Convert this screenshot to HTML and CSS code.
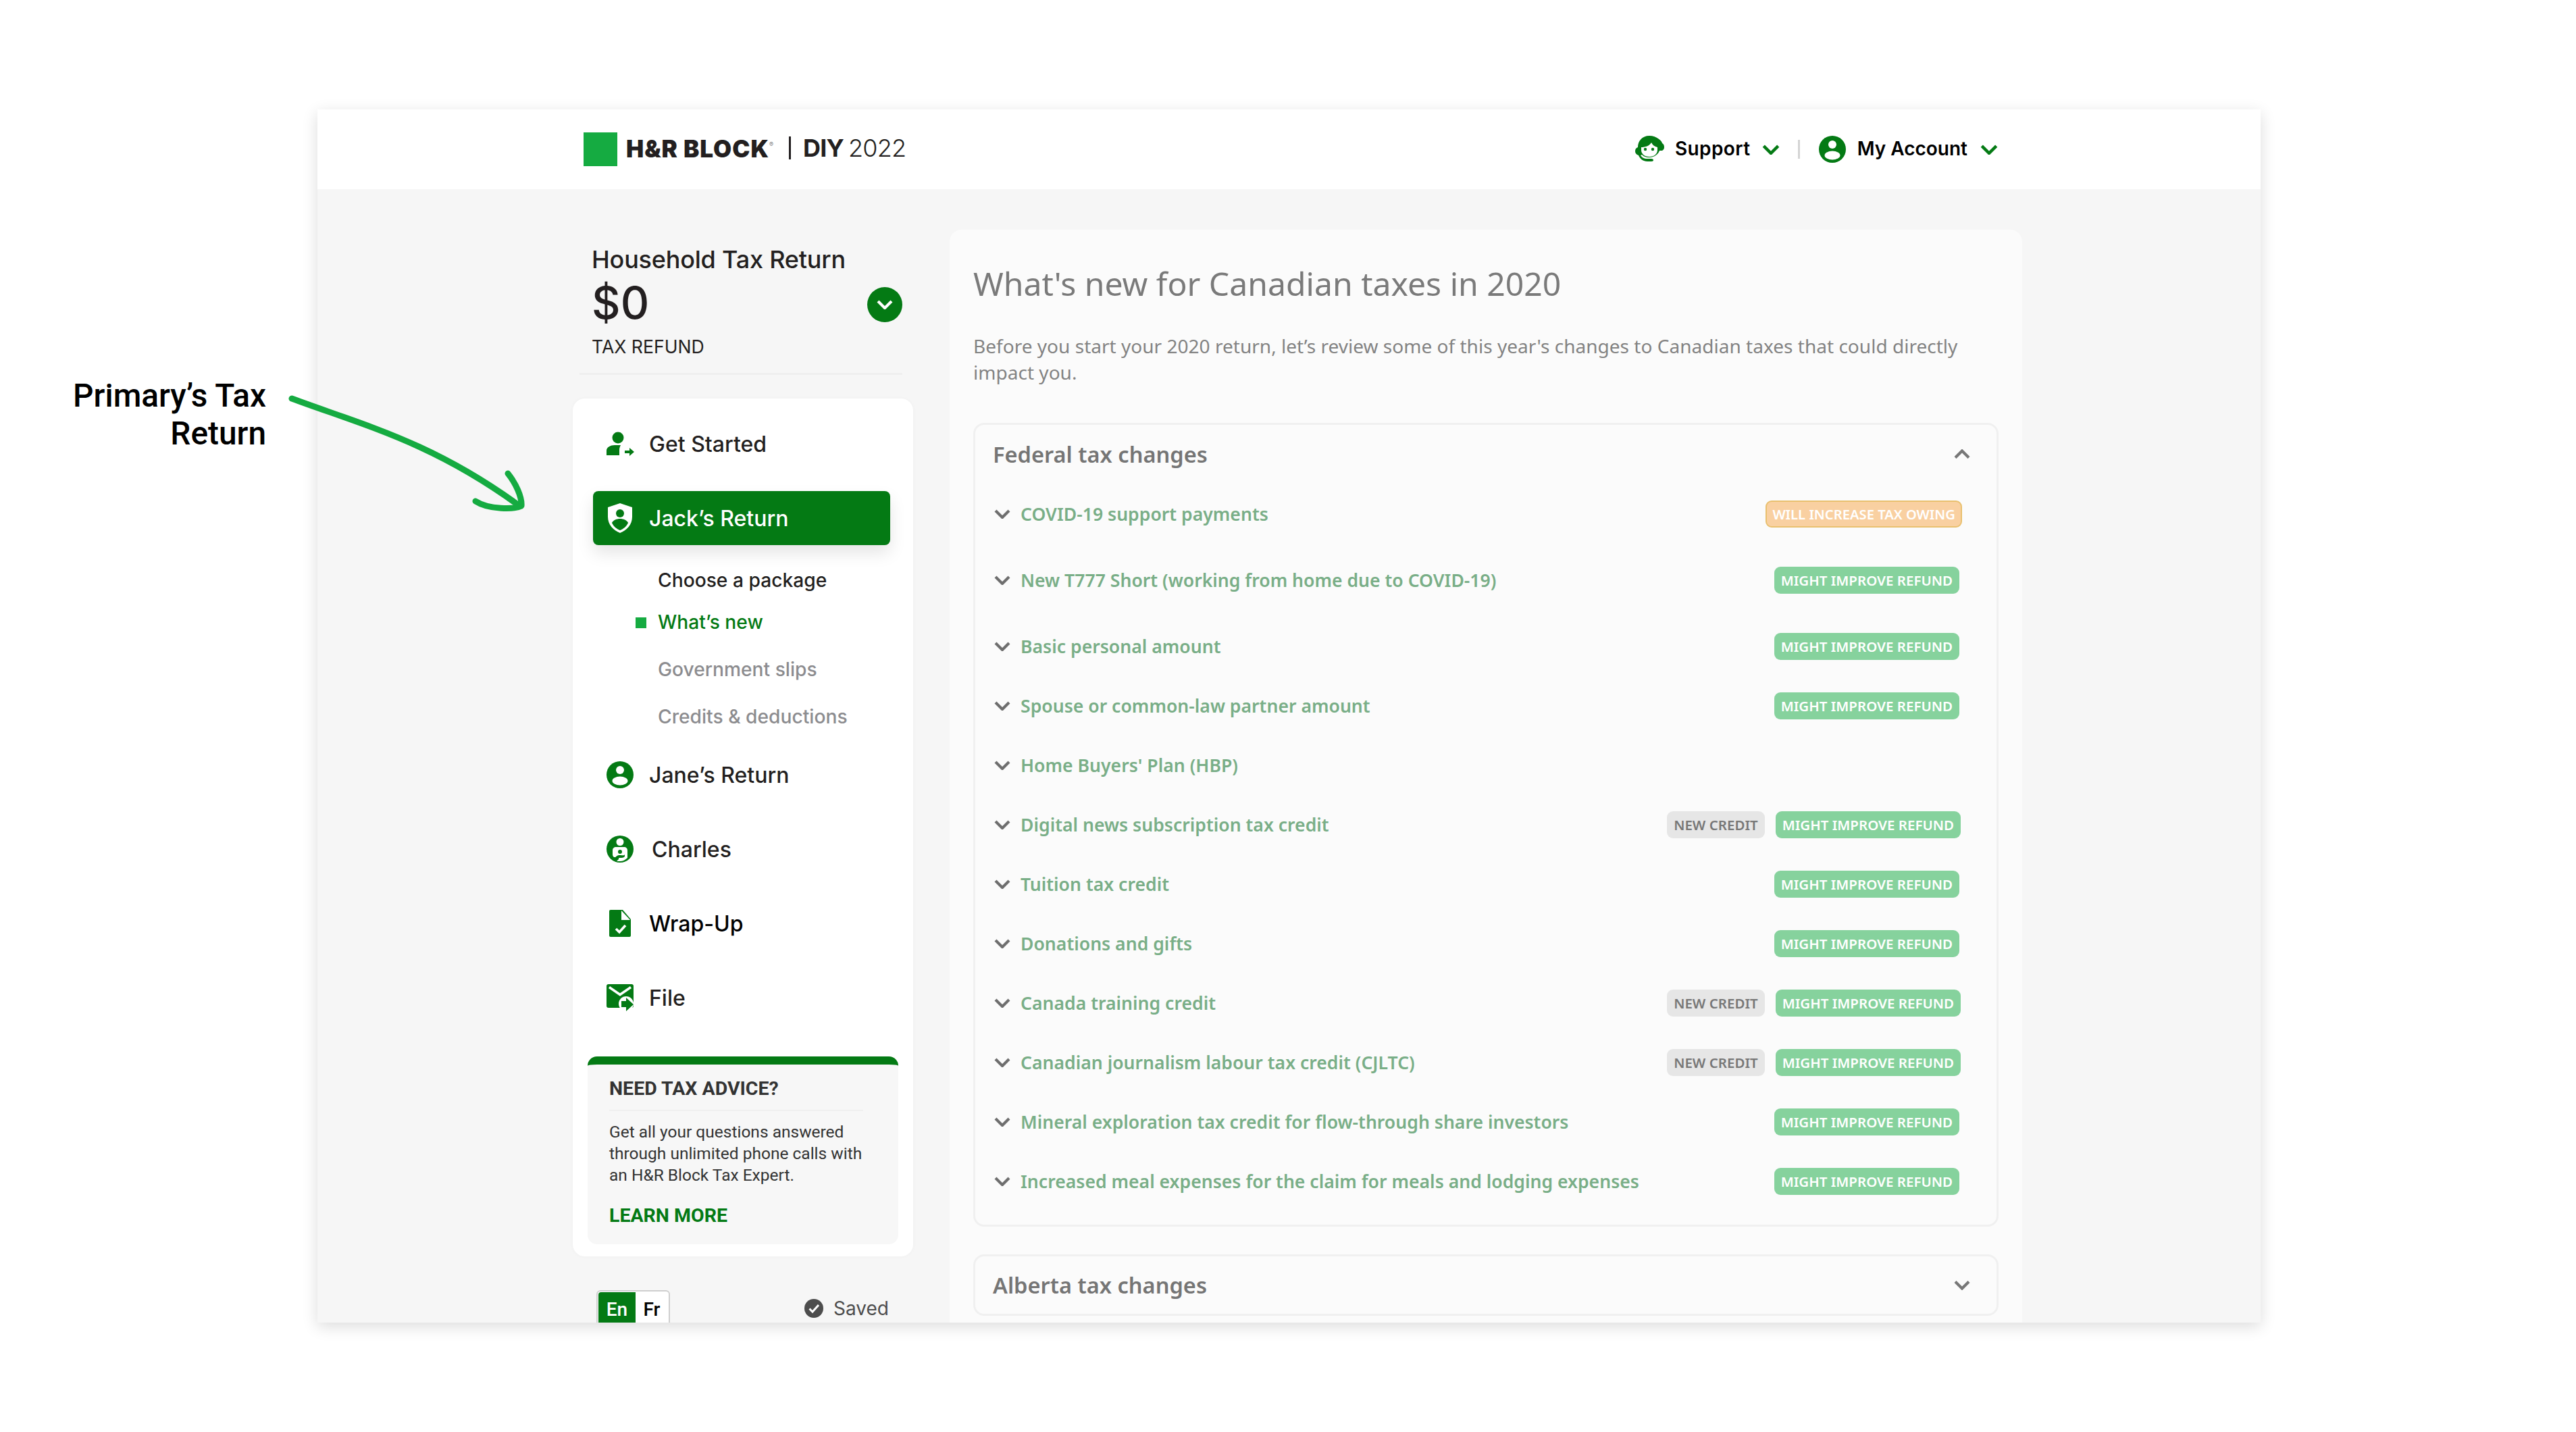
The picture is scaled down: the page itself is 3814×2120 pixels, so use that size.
FILE: index.html
```html
<!DOCTYPE html>
<html lang="en">
<head>
<meta charset="utf-8">
<title>H&amp;R Block DIY 2022</title>
<link rel="stylesheet" href="styles.css">
</head>
<body>
<svg class="defs" width="0" height="0" aria-hidden="true">
  <symbol id="chev" viewBox="0 0 24 14"><path d="M2 2l10 10L22 2" fill="none" stroke="currentColor" stroke-width="4.200"/></symbol>
</svg>
<div class="note">Primary’s Tax<br>Return</div>
<svg class="arrow" width="360" height="180" viewBox="425 583 360 180" aria-hidden="true">
  <path d="M432 590C540 630 640 655 768 748" fill="none" stroke="#15ab41" stroke-width="9" stroke-linecap="round"/>
  <path d="M752 701C764 716 773 736 772 749C762 754 724 755 704 742" fill="none" stroke="#15ab41" stroke-width="9" stroke-linecap="round" stroke-linejoin="round"/>
</svg>
<div class="frame">
  <header class="top">
    <div class="logo">
      <span class="logo-mark"></span>
      <span class="logo-word">H&amp;R BLOCK</span><span class="logo-reg">®</span>
      <span class="logo-bar"></span>
      <span class="logo-diy">DIY</span><span class="logo-year">2022</span>
    </div>
    <nav class="top-nav">
      <svg class="top-icon" width="44" height="40" viewBox="0 0 44 40" aria-hidden="true">
        <path fill="#047a14" d="M22 0C11 0 5 8 5 17c-3 1-4 3-4 6s2 5 5 6c2 5 7 9 13 9h6c2 0 3-1 3-2s-1-2-3-2h-6c-5 0-8-2-10-5l2-1c2 2 5 4 11 4 8 0 14-6 15-10h4c2-1 3-3 3-5 0-3-1-5-3-6C41 8 33 0 22 0z"/>
        <path fill="#fff" d="M10 17c6 0 12-2 15-7 2 4 5 6 9 7v4c0 6-5 10-12 10s-12-4-12-10z"/>
        <circle cx="16" cy="20" r="2.200" fill="#047a14"/><circle cx="27" cy="20" r="2.200" fill="#047a14"/>
      </svg>
      <span class="top-link top-link--support">Support</span>
      <svg class="top-chev" width="26" height="15" aria-hidden="true"><use href="#chev"/></svg>
      <span class="top-sep"></span>
      <svg class="top-icon" width="42" height="40" viewBox="0 0 40 40" aria-hidden="true">
        <circle cx="20" cy="20" r="20" fill="#047a14"/><circle cx="20" cy="13" r="6" fill="#fff"/><ellipse cx="20" cy="29" rx="11.500" ry="6.500" fill="#fff"/>
      </svg>
      <span class="top-link">My Account</span>
      <svg class="top-chev top-chev--end" width="26" height="15" aria-hidden="true"><use href="#chev"/></svg>
    </nav>
  </header>
  <div class="body">
    <aside class="side">
      <div class="sum-title">Household Tax Return</div>
      <div class="sum-row">
        <span class="sum-amount">$0</span>
        <span class="sum-btn"><svg width="24" height="14" aria-hidden="true"><use href="#chev"/></svg></span>
      </div>
      <div class="sum-label">TAX REFUND</div>
      <div class="sum-rule"></div>
      <div class="card">
        <div class="item">
          <span class="item-icon"><svg width="42" height="36" viewBox="0 0 42 36" aria-hidden="true"><circle cx="17" cy="9" r="8.500" fill="#047a14"/><path fill="#047a14" d="M0 35v-7c0-5 6-8 12-8h9c-1 2-2 4-2 7v8z"/><path fill="#047a14" d="M27 28h7v-4l7 6-7 6v-4h-7z"/></svg></span>
          <span>Get Started</span>
        </div>
        <div class="item item--active">
          <span class="item-icon"><svg width="36" height="44" viewBox="0 0 36 44" class="icon-shield" aria-hidden="true"><path fill="#fff" d="M18 0l18 6v14c0 12-8 20-18 24C8 40 0 32 0 20V6z"/><circle cx="18" cy="15" r="6" fill="#047a14"/><path fill="#047a14" d="M6 29c2-4 7-6 12-6s10 2 12 6c-2 5-7 9-12 11-5-2-10-6-12-11z"/></svg></span>
          <span>Jack’s Return</span>
        </div>
        <ul class="subs">
          <li class="sub sub--done">Choose a package</li>
          <li class="sub sub--current">What’s new</li>
          <li class="sub">Government slips</li>
          <li class="sub">Credits &amp; deductions</li>
        </ul>
        <div class="item">
          <span class="item-icon"><svg width="40" height="40" viewBox="0 0 40 40" aria-hidden="true"><circle cx="20" cy="20" r="20" fill="#047a14"/><circle cx="20" cy="13" r="6" fill="#fff"/><ellipse cx="20" cy="29" rx="11.500" ry="6.500" fill="#fff"/></svg></span>
          <span>Jane’s Return</span>
        </div>
        <div class="item">
          <span class="item-icon"><svg width="40" height="40" viewBox="0 0 40 40" aria-hidden="true"><circle cx="20" cy="20" r="20" fill="#047a14"/><circle cx="20" cy="9.500" r="5.500" fill="#fff"/><path fill="#fff" d="M14 17h12c3 0 5 2 5 5v11c-3 3-7 5-11 5h-5l3-3v-3h-7c-1-1-2-2-2-4V22c0-3 2-5 5-5z"/><circle cx="20" cy="24" r="3" fill="#047a14"/><path fill="#047a14" d="M13 34c0-3 3-5 7-5s6 1 7-1v3c-2 2-4 2-7 2z"/></svg></span>
          <span class="item-text--shift">Charles</span>
        </div>
        <div class="item">
          <span class="item-icon item-icon--doc"><svg width="32" height="40" viewBox="0 0 32 40" aria-hidden="true"><path fill="#047a14" d="M2 0h18l12 14v24a2 2 0 0 1-2 2H2a2 2 0 0 1-2-2V2a2 2 0 0 1 2-2z"/><path fill="#fff" d="M18 1v14h13z"/><path d="M10 28l5 5 9-10" fill="none" stroke="#fff" stroke-width="3.600"/></svg></span>
          <span class="item-text--strong">Wrap-Up</span>
        </div>
        <div class="item">
          <span class="item-icon"><svg width="40" height="40" viewBox="0 0 40 40" aria-hidden="true"><path fill="#047a14" d="M3 0h34a3 3 0 0 1 3 3v29a3 3 0 0 1-3 3H3a3 3 0 0 1-3-3V3a3 3 0 0 1 3-3z"/><path d="M4 4.500l16 11 16-11" fill="none" stroke="#fff" stroke-width="3.600"/><circle cx="29" cy="29" r="11" fill="#fff"/><path fill="#047a14" d="M22 25h7v-5l11 10-11 10v-6h-7z"/></svg></span>
          <span>File</span>
        </div>
        <section class="advice">
          <h3 class="advice-title">NEED TAX ADVICE?</h3>
          <p class="advice-text">Get all your questions answered through unlimited phone calls with an H&amp;R Block Tax Expert.</p>
          <a class="advice-link">LEARN MORE</a>
        </section>
      </div>
      <div class="foot">
        <div class="lang"><span class="lang-on">En</span><span class="lang-off">Fr</span></div>
        <div class="saved">
          <svg width="28" height="28" viewBox="0 0 28 28" aria-hidden="true"><circle cx="14" cy="14" r="14" fill="#4d4d4d"/><path d="M7.500 14.500l4.500 4.500 9-10" fill="none" stroke="#fff" stroke-width="3"/></svg>
          <span>Saved</span>
        </div>
      </div>
    </aside>
    <main class="main">
      <h1 class="title">What's new for Canadian taxes in 2020</h1>
      <p class="lead">Before you start your 2020 return, let’s review some of this year's changes to Canadian taxes that could directly impact you.</p>
      <section class="box">
        <div class="box-head">
          <h2 class="box-title">Federal tax changes</h2>
          <svg class="box-chev box-chev--up" width="24" height="15" aria-hidden="true"><use href="#chev"/></svg>
        </div>
        <div class="row row--gap"><svg class="row-chev" width="24" height="14" aria-hidden="true"><use href="#chev"/></svg><span class="row-text">COVID-19 support payments</span><span class="tag tag--warn">WILL INCREASE TAX OWING</span></div>
        <div class="row row--gap"><svg class="row-chev" width="24" height="14" aria-hidden="true"><use href="#chev"/></svg><span class="row-text">New T777 Short (working from home due to COVID-19)</span><span class="tag">MIGHT IMPROVE REFUND</span></div>
        <div class="row"><svg class="row-chev" width="24" height="14" aria-hidden="true"><use href="#chev"/></svg><span class="row-text">Basic personal amount</span><span class="tag">MIGHT IMPROVE REFUND</span></div>
        <div class="row"><svg class="row-chev" width="24" height="14" aria-hidden="true"><use href="#chev"/></svg><span class="row-text">Spouse or common-law partner amount</span><span class="tag">MIGHT IMPROVE REFUND</span></div>
        <div class="row"><svg class="row-chev" width="24" height="14" aria-hidden="true"><use href="#chev"/></svg><span class="row-text">Home Buyers' Plan (HBP)</span></div>
        <div class="row row--pair"><svg class="row-chev" width="24" height="14" aria-hidden="true"><use href="#chev"/></svg><span class="row-text">Digital news subscription tax credit</span><span class="tag tag--new">NEW CREDIT</span><span class="tag">MIGHT IMPROVE REFUND</span></div>
        <div class="row"><svg class="row-chev" width="24" height="14" aria-hidden="true"><use href="#chev"/></svg><span class="row-text">Tuition tax credit</span><span class="tag">MIGHT IMPROVE REFUND</span></div>
        <div class="row"><svg class="row-chev" width="24" height="14" aria-hidden="true"><use href="#chev"/></svg><span class="row-text">Donations and gifts</span><span class="tag">MIGHT IMPROVE REFUND</span></div>
        <div class="row row--pair"><svg class="row-chev" width="24" height="14" aria-hidden="true"><use href="#chev"/></svg><span class="row-text">Canada training credit</span><span class="tag tag--new">NEW CREDIT</span><span class="tag">MIGHT IMPROVE REFUND</span></div>
        <div class="row row--pair"><svg class="row-chev" width="24" height="14" aria-hidden="true"><use href="#chev"/></svg><span class="row-text">Canadian journalism labour tax credit (CJLTC)</span><span class="tag tag--new">NEW CREDIT</span><span class="tag">MIGHT IMPROVE REFUND</span></div>
        <div class="row"><svg class="row-chev" width="24" height="14" aria-hidden="true"><use href="#chev"/></svg><span class="row-text">Mineral exploration tax credit for flow-through share investors</span><span class="tag">MIGHT IMPROVE REFUND</span></div>
        <div class="row"><svg class="row-chev" width="24" height="14" aria-hidden="true"><use href="#chev"/></svg><span class="row-text">Increased meal expenses for the claim for meals and lodging expenses</span><span class="tag">MIGHT IMPROVE REFUND</span></div>
      </section>
      <section class="box box--closed">
        <div class="box-head">
          <h2 class="box-title">Alberta tax changes</h2>
          <svg class="box-chev" width="24" height="15" aria-hidden="true"><use href="#chev"/></svg>
        </div>
      </section>
    </main>
  </div>
</div>
</body>
</html>
```
FILE: styles.css
```css
* { box-sizing: border-box; }
html, body { margin: 0; padding: 0; }
body {
  width: 3814px;
  height: 2120px;
  background: #fff;
  font-family: "Inter", "Liberation Sans", sans-serif;
  color: #231f20;
  overflow: hidden;
  position: relative;
}
.defs { position: absolute; }

.note {
  position: absolute;
  left: 60px;
  top: 558px;
  width: 334px;
  text-align: right;
  font-family: "Roboto", sans-serif;
  font-weight: 500;
  font-size: 47.8px;
  line-height: 56px;
  color: #000;
  z-index: 3;
}
.arrow { position: absolute; left: 425px; top: 583px; z-index: 3; }

.frame {
  width: 2877px;
  height: 1796px;
  margin: 162px 0 0 470px;
  overflow: hidden;
  background: #f6f6f6;
  box-shadow: 0 6px 22px rgba(0, 0, 0, .14);
}

.top {
  height: 118px;
  background: #fff;
  display: flex;
  align-items: center;
  justify-content: space-between;
  padding: 0 389px 0 394px;
}
.logo { display: flex; align-items: center; height: 50px; color: #231f20; }
.logo-mark { width: 50px; height: 50px; background: #15ab41; margin-right: 13px; }
.logo-word { font-family: "Inter", sans-serif; font-weight: 900; font-size: 35px; letter-spacing: 1px; position: relative; top: -1px; }
.logo-reg { font-size: 9px; align-self: flex-start; margin: 12px 0 0 0; color: #777; }
.logo-bar { width: 3px; height: 34px; background: #231f20; margin: 0 18px 0 23px; position: relative; top: -2px; }
.logo-diy { font-weight: 700; font-size: 36px; letter-spacing: -.8px; position: relative; top: -2px; margin-right: 7px; }
.logo-year { font-weight: 300; font-size: 36px; letter-spacing: -.8px; position: relative; top: -2px; }

.top-nav { display: flex; align-items: center; }
.top-icon { flex: none; margin-right: 16px; }
.top-link { font-family: "Inter", sans-serif; font-weight: 600; font-size: 28px; color: #000; position: relative; top: -1px; }
.top-link--support { letter-spacing: .4px; }
.top-chev { color: #047a14; margin-left: 17px; }
.top-chev--end { margin-left: 19px; }
.top-sep { width: 3px; height: 28px; background: #d4d4d4; margin: 0 27px 0 27px; }

.body { display: flex; gap: 54px; padding: 60px 0 0 378px; height: 1678px; overflow: hidden; }

.side { width: 504px; flex: none; }
.sum-title { padding: 22px 0 0 28px; font-size: 36px; line-height: 44px; font-weight: 500; letter-spacing: -.2px; }
.sum-row { display: flex; align-items: center; justify-content: space-between; height: 80px; margin-top: 2px; padding: 0 16px 0 28px; }
.sum-amount { font-size: 66px; font-weight: 500; line-height: 80px; }
.sum-btn { width: 52px; height: 52px; border-radius: 50%; background: #047a14; color: #fff; display: flex; align-items: center; justify-content: center; margin-top: 5px; }
.sum-label { padding-left: 28px; margin-top: 7px; font-size: 26.6px; line-height: 36px; font-weight: 400; }
.sum-rule { height: 3px; background: #efefef; margin: 21px 16px 35px 10px; }

.card { background: #fff; border-radius: 18px; padding: 27px 0 18px; height: 1270px; box-shadow: 0 0 6px rgba(0,0,0,.03); }
.item { display: flex; align-items: center; height: 80px; margin: 0 34px 30px 30px; padding-left: 20px; font-size: 32px; font-weight: 500; border-radius: 8px; }
.item-icon { width: 63px; flex: none; display: flex; align-items: center; }
.item-icon--doc { padding-left: 4px; }
.item-text--shift { margin-left: 4px; }
.item-text--strong { color: #000; }
.item--active { background: #047a14; color: #fff; margin-bottom: 0; box-shadow: 0 12px 24px rgba(0, 0, 0, .1); }
.icon-shield { margin-left: 2px; }

.subs { list-style: none; margin: 0 0 0 30px; padding: 32px 0 26px 96px; display: flex; flex-direction: column; gap: 30px; }
.sub { position: relative; font-size: 28.2px; line-height: 40px; font-weight: 500; color: #8c8c8f; }
.sub--done { color: #231f20; margin-bottom: -8px; }
.sub--current { color: #047a14; }
.sub--current::before { content: ""; position: absolute; left: -33px; top: 13px; width: 16px; height: 16px; background: #15ab41; }

.advice { margin: 47px 22px 0; height: 278px; background: #f7f7f7; border-top: 12px solid #047a14; border-radius: 14px; padding: 0 32px; font-family: "Roboto", sans-serif; color: #333; }
.advice-title { margin: 0; font-size: 28.5px; font-weight: 700; line-height: 72px; height: 69px; border-bottom: 2px solid #f0f0f0; width: 376px; }
.advice-text { margin: 15px 0 0; font-size: 24.5px; line-height: 32px; width: 380px; }
.advice-link { display: block; margin-top: 26px; font-size: 28.5px; font-weight: 700; line-height: 36px; color: #047a14; }

.foot { display: flex; justify-content: space-between; margin-top: 50px; padding: 0 36px 0 35px; align-items: flex-start; }
.lang { display: flex; border: 2px solid #cfcfcf; border-radius: 6px; width: 109px; height: 70px; overflow: hidden; background: #fff; font-family: "Roboto", sans-serif; font-size: 28px; font-weight: 500; line-height: 52px; padding: 1px; }
.lang-on { width: 55px; background: #047a14; color: #fff; text-align: center; border-radius: 4px 0 0 4px; }
.lang-off { flex: 1; text-align: center; color: #000; }
.saved { display: flex; align-items: center; gap: 15px; height: 54px; font-size: 28px; color: #4d4d4d; font-weight: 400; }

.main { width: 1588px; flex: none; background: #fbfbfb; border-radius: 18px 18px 0 0; padding: 0 35px; height: 1700px; font-family: "Noto Sans", sans-serif; color: #7a7a7a; }
.title { margin: 0; padding-top: 48px; font-size: 48.1px; line-height: 64px; font-weight: 400; }
.lead { margin: 41px 0 0; font-size: 28.05px; line-height: 38.5px; color: #838383; }
.box { border: 3px solid #f0f0f0; border-radius: 16px; margin-top: 56px; padding-bottom: 21px; }
.box--closed { margin-top: 41px; height: 91px; padding: 0; }
.box-head { display: flex; align-items: center; justify-content: space-between; height: 87px; padding: 0 39px 0 26px; }
.box--closed .box-head { height: 85px; }
.box-title { margin: 0; font-size: 32.6px; font-weight: 600; color: #757575; }
.box-chev { color: #777; }
.box-chev--up { transform: scaleY(-1); }

.row { display: flex; align-items: center; height: 88px; padding: 1px 55px 0 28px; }
.row--gap { margin-bottom: 10px; }
.row--pair { padding-right: 53px; }
.row-chev { color: #6e6e6e; flex: none; margin-right: 15px; }
.row-text { flex: 1; font-size: 26.6px; font-weight: 600; color: #79ae87; }
.tag { height: 40px; padding: 0 10px; border-radius: 9px; background: #86d29d; color: #fff; font-size: 20.5px; font-weight: 600; line-height: 40px; white-space: nowrap; }
.tag--warn { background: #f9d0a1; border: 2px solid #e9c06f; font-size: 20.2px; line-height: 36px; margin-right: -4px; padding: 0 8px; }
.tag--new { background: #e6e6e6; color: #777; margin-right: 16px; }
```
